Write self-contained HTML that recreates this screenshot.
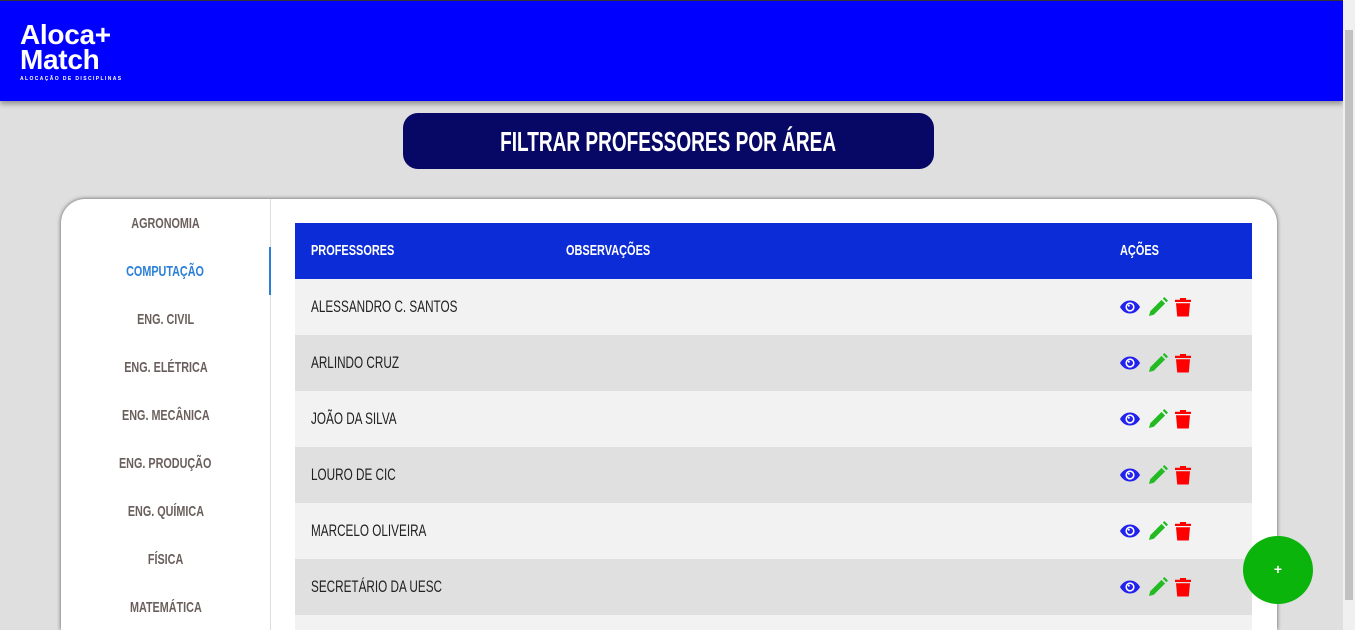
<!DOCTYPE html>
<html><head><meta charset="utf-8"><style>
*{margin:0;padding:0;box-sizing:border-box}
html,body{width:1355px;height:630px;overflow:hidden}
body{background:#dfdfdf;font-family:"Liberation Sans",sans-serif;position:relative}
.n{display:inline-block;transform-origin:left center;white-space:nowrap}
.hdr{position:absolute;left:0;top:0;width:1343px;height:101px;background:#0000ff;border-top:1px solid #333;box-shadow:0 3px 5px rgba(0,0,0,.35)}
.logo{position:absolute;left:20px;top:21px;color:#fff;font-weight:bold;font-size:28px;line-height:25px;letter-spacing:-.3px}
.logo small{display:block;font-size:5px;letter-spacing:1.4px;line-height:8px;margin-top:3px;font-weight:bold}
.sb{position:absolute;left:1343px;top:0;width:12px;height:630px;background:#f0f0f0}
.thumb{position:absolute;left:1345px;top:30px;width:8px;height:570px;background:#c1c1c1}
.title{position:absolute;left:403px;top:113px;width:531px;height:56px;background:#070766;border-radius:15px;color:#fff;font-weight:bold;font-size:28px;text-align:center;line-height:58px}
.title .n{transform:scaleX(.68);transform-origin:center}
.card{position:absolute;left:61px;top:199px;width:1216px;height:431px;background:#fff;border-radius:24px 24px 0 0;box-shadow:0 0 4px rgba(0,0,0,.6);overflow:hidden}
.side{position:absolute;left:0;top:0;width:210px;height:431px;border-right:1px solid #ddd}
.side div{height:48px;line-height:50px;text-align:center;color:#6a5f5c;font-weight:bold;font-size:15px}
.side .n{transform:scaleX(.72);transform-origin:center}
.side .act{color:#2a7fd6;border-right:2px solid #2a7fd6;margin-right:-1px}
.tbl{position:absolute;left:234px;top:24px;width:957px;height:407px;overflow:hidden}
.th{height:56px;background:#0c2cd8;color:#fff;font-weight:bold;font-size:15px;position:relative}
.th .n{transform:scaleX(.73)}
.th span,.r span{position:absolute;top:0;line-height:56px}
.r{height:56px;position:relative;font-size:17px;color:#222}
.r .n{transform:scaleX(.69)}
.a{background:#f2f2f2}.b{background:#e0e0e0}
.ic{position:absolute;left:825px;top:18px}
.fab{position:absolute;left:1243px;top:536px;width:70px;height:68px;border-radius:50%;background:#0ab40a;color:#fff;text-align:center;line-height:66px;font-weight:bold;font-size:14px}
</style></head><body>
<svg width="0" height="0" style="position:absolute"><defs>
<g id="icons">
<path d="M0 10C2.5 5.5 6 3.5 10 3.5S17.5 5.5 20 10C17.5 14.5 14 16.5 10 16.5S2.5 14.5 0 10Z" fill="#2222ee"/>
<circle cx="10" cy="10" r="4.6" fill="#fff"/><circle cx="10" cy="10" r="3" fill="#2222ee"/>
<circle cx="8.8" cy="8.8" r="1" fill="#fff"/>
<path d="M29 19L30.2 14.2L41.5 2.9L45.1 6.5L33.8 17.8Z" fill="#22bb22"/><path d="M42.8 1.6L44.4 0L48 3.6L46.4 5.2Z" fill="#22bb22"/>
<path d="M60 1H66V2.8H71V5H55V2.8H60Z" fill="#ff0000"/><path d="M56 6.3H70L68.8 19.5H57.2Z" fill="#ff0000"/>
</g></defs></svg>
<div class="hdr"><div class="logo">Aloca+<br>Match<small>ALOCAÇÃO DE DISCIPLINAS</small></div></div>
<div class="sb"></div><div class="thumb"></div>
<div class="title"><span class="n">FILTRAR PROFESSORES POR ÁREA</span></div>
<div class="card">
<div class="side"><div><span class="n">AGRONOMIA</span></div><div class="act"><span class="n">COMPUTAÇÃO</span></div><div><span class="n">ENG. CIVIL</span></div><div><span class="n">ENG. ELÉTRICA</span></div><div><span class="n">ENG. MECÂNICA</span></div><div><span class="n">ENG. PRODUÇÃO</span></div><div><span class="n">ENG. QUÍMICA</span></div><div><span class="n">FÍSICA</span></div><div><span class="n">MATEMÁTICA</span></div></div>
<div class="tbl">
<div class="th"><span style="left:16px"><span class="n">PROFESSORES</span></span><span style="left:271px"><span class="n">OBSERVAÇÕES</span></span><span style="left:825px"><span class="n">AÇÕES</span></span></div>
<div class="r a"><span style="left:16px"><span class="n">ALESSANDRO C. SANTOS</span></span><svg class="ic" width="72" height="20"><use href="#icons"/></svg></div>
<div class="r b"><span style="left:16px"><span class="n">ARLINDO CRUZ</span></span><svg class="ic" width="72" height="20"><use href="#icons"/></svg></div>
<div class="r a"><span style="left:16px"><span class="n">JOÃO DA SILVA</span></span><svg class="ic" width="72" height="20"><use href="#icons"/></svg></div>
<div class="r b"><span style="left:16px"><span class="n">LOURO DE CIC</span></span><svg class="ic" width="72" height="20"><use href="#icons"/></svg></div>
<div class="r a"><span style="left:16px"><span class="n">MARCELO OLIVEIRA</span></span><svg class="ic" width="72" height="20"><use href="#icons"/></svg></div>
<div class="r b"><span style="left:16px"><span class="n">SECRETÁRIO DA UESC</span></span><svg class="ic" width="72" height="20"><use href="#icons"/></svg></div>
<div class="r a"></div>
</div>
</div>
<div class="fab">+</div>
</body></html>
